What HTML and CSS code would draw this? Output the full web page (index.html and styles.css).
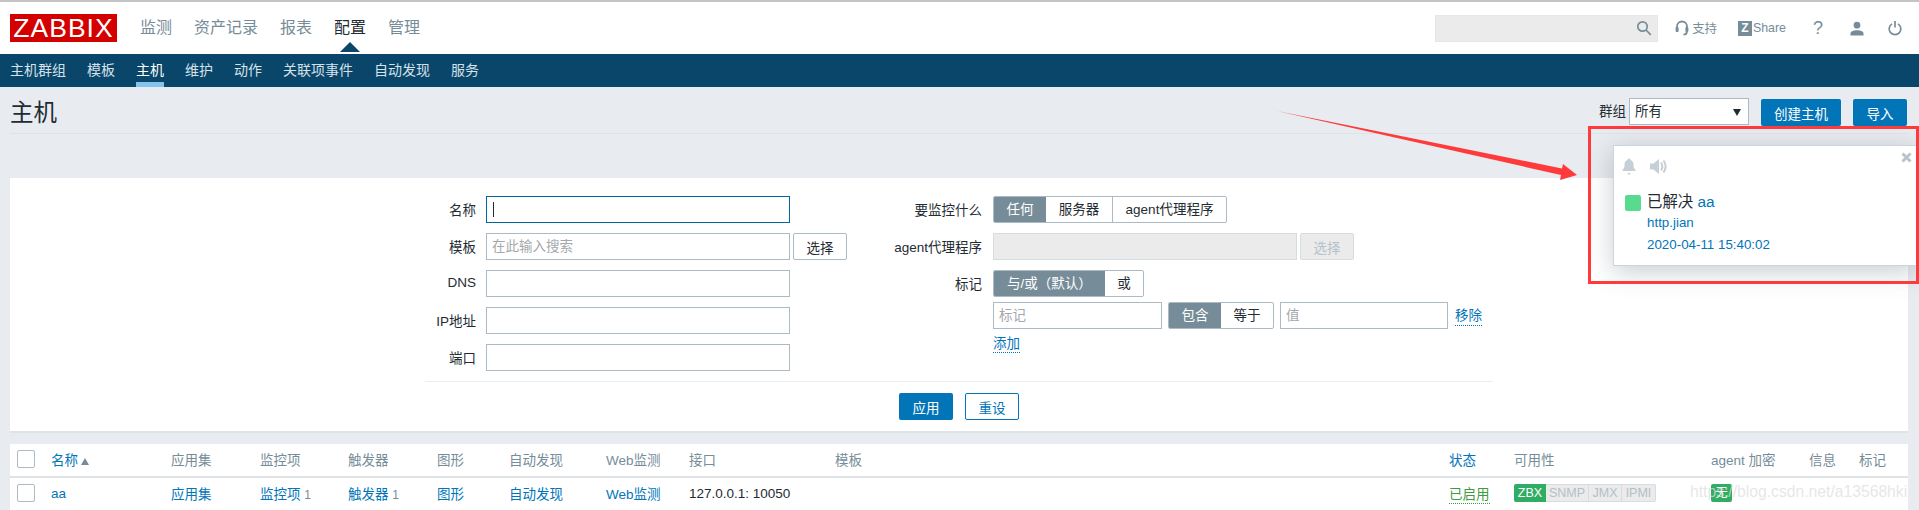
FILE: index.html
```html
<!DOCTYPE html>
<html lang="zh-CN">
<head>
    <meta charset="UTF-8">
    <title>主机 - Zabbix</title>
    <link rel="stylesheet" href="styles.css">
</head>
<body>
    <!-- Top menu -->
    <div class="top-bar">
        <div class="logo">ZABBIX</div>
        <div class="main-nav">
            <a>监测</a>
            <a>资产记录</a>
            <a>报表</a>
            <a class="active">配置</a>
            <a>管理</a>
        </div>
        <div class="top-tools">
            <div class="search-box">
                <svg class="search-icon" width="16" height="16" viewBox="0 0 16 16"><circle cx="6.5" cy="6.5" r="4.7"/><path d="M10 10l4.8 4.8"/></svg>
            </div>
            <a class="tool support">
                <svg width="14" height="16" viewBox="0 0 14 16"><path class="line" d="M2 9V6.5a5 5 0 0 1 10 0V9"/><rect class="solid" x="0.6" y="7" width="3" height="5" rx="1"/><rect class="solid" x="10.4" y="7" width="3" height="5" rx="1"/><path class="line" d="M11.8 12c0 1.7-1.5 2.6-3.3 2.6"/></svg>
                <span>支持</span>
            </a>
            <a class="tool share">
                <span class="z-box">Z</span>
                <span>Share</span>
            </a>
            <a class="tool help">?</a>
            <a class="tool user">
                <svg width="14" height="15" viewBox="0 0 15 15"><circle class="solid" cx="7.5" cy="4" r="3.6"/><path class="solid" d="M0.5 15v-2c0-2.3 2.8-3.6 7-3.6s7 1.300 7 3.600v2z"/></svg>
            </a>
            <a class="tool power">
                <svg width="14" height="16" viewBox="0 0 15 16"><path class="line" d="M4.300 3.600a6.200 6.200 0 1 0 6.400 0"/><path class="line" d="M7.500 0.500v7"/></svg>
            </a>
        </div>
    </div>

    <div class="sub-nav">
        <a>主机群组</a>
        <a>模板</a>
        <a class="active">主机</a>
        <a>维护</a>
        <a>动作</a>
        <a>关联项事件</a>
        <a>自动发现</a>
        <a>服务</a>
    </div>

    <!-- Page title -->
    <div class="title-row">
        <h1>主机</h1>
        <div class="title-controls">
            <label>群组</label>
            <div class="select-box">所有<span class="select-arrow"></span></div>
            <button class="btn primary first">创建主机</button>
            <button class="btn primary narrow">导入</button>
        </div>
    </div>

    <!-- Filter -->
    <div class="filter-panel">
        <div class="filter">
            <div class="filter-col left">
                <div class="form-row">
                    <label>名称</label>
                    <div class="fake-input focused"><span class="caret"></span></div>
                </div>
                <div class="form-row">
                    <label>模板</label>
                    <input class="text-input" type="text" placeholder="在此输入搜索">
                    <button class="btn plain pick">选择</button>
                </div>
                <div class="form-row">
                    <label>DNS</label>
                    <input class="text-input" type="text">
                </div>
                <div class="form-row">
                    <label>IP地址</label>
                    <input class="text-input" type="text">
                </div>
                <div class="form-row">
                    <label>端口</label>
                    <input class="text-input" type="text">
                </div>
            </div>
            <div class="filter-col right">
                <div class="form-row">
                    <label>要监控什么</label>
                    <div class="seg">
                        <span class="on w53">任何</span>
                        <span class="w66">服务器</span>
                        <span class="w115">agent代理程序</span>
                    </div>
                </div>
                <div class="form-row">
                    <label>agent代理程序</label>
                    <div class="fake-input disabled"></div>
                    <button class="btn plain pick-disabled">选择</button>
                </div>
                <div class="form-row tight">
                    <label>标记</label>
                    <div class="seg">
                        <span class="on w112">与/或（默认）</span>
                        <span class="w39">或</span>
                    </div>
                </div>
                <div class="tag-row">
                    <input class="text-input tag-input" type="text" placeholder="标记">
                    <div class="seg">
                        <span class="on w53">包含</span>
                        <span class="w53">等于</span>
                    </div>
                    <input class="text-input value-input" type="text" placeholder="值">
                    <a class="dotted remove">移除</a>
                </div>
                <div class="add-row"><a class="dotted">添加</a></div>
            </div>
        </div>
        <div class="filter-line"></div>
        <div class="filter-buttons">
            <button class="btn primary apply">应用</button>
            <button class="btn outline apply">重设</button>
        </div>
    </div>

    <!-- Hosts -->
    <div class="host-table">
        <div class="table-row head">
            <div><span class="check"></span></div>
            <div><a>名称</a><span class="sort-up"></span></div>
            <div>应用集</div>
            <div>监控项</div>
            <div>触发器</div>
            <div>图形</div>
            <div>自动发现</div>
            <div>Web监测</div>
            <div>接口</div>
            <div>模板</div>
            <div><a>状态</a></div>
            <div>可用性</div>
            <div>agent 加密</div>
            <div>信息</div>
            <div>标记</div>
        </div>
        <div class="table-row body-row">
            <div><span class="check"></span></div>
            <div><a>aa</a></div>
            <div><a>应用集</a></div>
            <div><a>监控项</a> <span class="count">1</span></div>
            <div><a>触发器</a> <span class="count">1</span></div>
            <div><a>图形</a></div>
            <div><a>自动发现</a></div>
            <div><a>Web监测</a></div>
            <div>127.0.0.1: 10050</div>
            <div></div>
            <div><a class="dotted enabled">已启用</a></div>
            <div class="badges">
                <span class="badge green w32">ZBX</span><span class="badge off w43">SNMP</span><span class="badge off w33">JMX</span><span class="badge off w34">IPMI</span>
            </div>
            <div class="badges"><span class="badge green w21">无</span></div>
            <div></div>
            <div></div>
        </div>
    </div>

    <!-- Things lying over the page -->
    <div class="popup">
        <div class="popup-icons">
            <svg width="14" height="17" viewBox="0 0 14 17"><path d="M7 0.500c1 0 1.500.7 1.500 1.400 2.400.7 3 2.700 3 5 0 2.500.8 3.700 2 5v1H.5v-1c1.200-1.300 2-2.500 2-5 0-2.300.6-4.300 3-5C5.500 1.200 6 .5 7 .5z"/><path d="M5.500 15h3a1.500 1.500 0 0 1-3 0z"/></svg>
            <svg width="17" height="17" viewBox="0 0 17 17"><path d="M0 5.500h3.500L9 1v15l-5.500-4.500H0z"/><path class="wave" d="M11 4.500c1.600 2.400 1.600 5.600 0 8"/><path class="wave" d="M13.500 2.500c2.600 3.600 2.600 8.400 0 12"/></svg>
            <svg class="popup-close" width="11" height="11" viewBox="0 0 11 11"><path d="M1.500 1.500l8 8M9.500 1.500l-8 8"/></svg>
        </div>
        <div class="popup-msg">
            <span class="popup-square"></span>
            <div class="popup-text">
                <div class="popup-title">已解决 <a>aa</a></div>
                <div class="popup-line"><a>http.jian</a></div>
                <div class="popup-line"><a>2020-04-11 15:40:02</a></div>
            </div>
        </div>
    </div>
    <div class="red-frame"></div>
    <svg class="red-arrow" width="330" height="90" viewBox="0 0 330 90"><polygon points="7,11 292,68.500 293,64 307,75 290,80 291,75"/></svg>
    <div class="watermark">https://blog.csdn.net/a13568hki</div>
</body>
</html>
```

FILE: styles.css
```css
* { margin: 0; padding: 0; box-sizing: border-box; }
html, body { height: 510px; overflow: hidden; }
body { position: relative; width: 1919px; font-family: "Liberation Sans", "Noto Sans CJK SC", sans-serif; font-size: 13.5px; color: #1f2c33; background: #e8ebef; }
a { color: #0275b8; }
button { font-family: inherit; font-size: inherit; }

.top-bar { height: 54px; display: flex; align-items: center; padding: 0 17px 0 10px; background: white; border-top: 2px solid #c4c4c4; }
.logo { width: 107px; height: 28px; background: #d40000; color: white; font-size: 26.5px; line-height: 28px; text-align: center; letter-spacing: 1px; overflow: hidden; }
.main-nav { display: flex; gap: 22px; margin-left: 23px; padding-bottom: 4px; font-size: 16px; }
.main-nav a { color: #768d99; }
.main-nav a.active { color: #1f2c33; position: relative; }
.main-nav a.active::after { content: ""; position: absolute; left: 6px; top: 28px; border: 10px solid transparent; border-top: 0; border-bottom-color: #0a466a; }

.top-tools { display: flex; align-items: center; margin-left: auto; color: #768d99; }
.top-tools svg .line { fill: none; stroke: #768d99; stroke-width: 1.800; }
.top-tools svg .solid { fill: #768d99; }
.search-box { width: 223px; height: 27px; background: #ebebeb; border: 1px solid #e4e6e8; display: flex; align-items: center; justify-content: flex-end; padding-right: 5px; }
.search-icon { fill: none; stroke: #768d99; stroke-width: 1.700; }
.tool { display: flex; align-items: center; gap: 3px; color: #768d99; font-size: 12.400px; }
.support { margin-left: 17px; }
.share { margin-left: 21px; gap: 1px; }
.z-box { width: 14px; height: 15px; background: #768d99; color: white; font-weight: bold; font-size: 12px; line-height: 15px; text-align: center; }
.help { width: 8px; margin-left: 28px; justify-content: center; font-size: 18px; }
.user { margin-left: 28px; }
.power { margin-left: 24px; }

.sub-nav { height: 33px; display: flex; gap: 21px; padding-left: 10px; background: #0a466a; }
.sub-nav a { color: #d5e2ea; font-size: 14px; line-height: 33px; }
.sub-nav a.active { color: white; border-bottom: 5px solid #84c5f0; }

.title-row { height: 47px; display: flex; justify-content: space-between; align-items: flex-start; margin: 0 11px 0 10px; padding-top: 11px; padding-right: 1px; border-bottom: 1px solid #dfe3e6; }
h1 { font-size: 23.500px; font-weight: normal; line-height: 30px; }
.title-controls { display: flex; align-items: flex-start; }
.title-controls label { line-height: 27px; margin-right: 3px; }
.select-box { width: 120px; height: 27px; position: relative; padding-left: 5px; line-height: 25px; background: white; border: 1px solid #acbbc3; }
.select-arrow { position: absolute; right: 7px; top: 10px; border: 4px solid transparent; border-bottom: 0; border-top: 7px solid #1f2c33; }

.btn { height: 27px; border-radius: 2px; border: 1px solid transparent; }
.btn.primary { background: #0275b8; color: white; margin-top: 1px; }
.btn.first { width: 80px; margin-left: 12px; }
.btn.narrow { width: 54px; margin-left: 12px; }
.btn.plain { background: white; border-color: #acbbc3; color: #1f2c33; }
.btn.outline { background: white; border-color: #0275b8; color: #0275b8; }
.pick { width: 54px; margin-left: 3px; }
.pick-disabled { width: 54px; margin-left: 3px; background: #ebebeb !important; border-color: #d5dde1 !important; color: #b5c2ca !important; }
.apply { width: 54px; margin-top: 0 !important; }

.filter-panel { margin: 44px 11px 0 10px; height: 255px; background: white; border-bottom: 2px solid #dfe3e6; }
.filter { display: flex; gap: 5px; height: 193px; padding: 18px 0 0 356px; }
.filter-col.left { width: 481px; }
.form-row { height: 27px; display: flex; align-items: center; margin-bottom: 10px; }
.form-row.tight { margin-bottom: 5px; }
.form-row label { flex: none; padding-bottom: 2px; text-align: right; }
.left label { width: 110px; margin-right: 10px; }
.right label { width: 130px; margin-right: 11px; }

.text-input, .fake-input { width: 304px; height: 27px; border: 1px solid #acbbc3; background: white; padding: 0 5px; font-family: inherit; font-size: inherit; outline: none; }
.text-input::placeholder { color: #a4a8ab; opacity: 1; }
.fake-input.focused { border-color: #00669e; display: flex; align-items: center; padding-left: 6px; }
.caret { width: 1px; height: 15px; background: #1f2c33; }
.fake-input.disabled { background: #ebebeb; border-color: #d5dde1; }

.seg { display: flex; height: 27px; border: 1px solid #acbbc3; border-radius: 2px; overflow: hidden; background: white; }
.seg span { text-align: center; line-height: 25px; border-left: 1px solid #acbbc3; }
.seg span:first-child { border-left: 0; }
.seg span.on { background: #768d99; color: white; }
.seg .on + span { border-left: 0; }
.w39 { width: 38px; }
.w53 { width: 52px; }
.w66 { width: 66px; }
.w112 { width: 111px; }
.w115 { width: 114px; }

.tag-row { display: flex; align-items: center; gap: 6px; margin-left: 141px; height: 27px; }
.tag-input { width: 169px; }
.value-input { width: 168px; }
.remove { margin-left: 1px; padding-bottom: 2px; margin-bottom: 1px; }
.add-row { margin: 3px 0 0 141px; }
.dotted { border-bottom: 1px dotted #0275b8; padding-bottom: 1px; }

.filter-line { margin: 10px 415px 0; height: 1px; background: #ebeef0; }
.filter-buttons { display: flex; justify-content: center; gap: 12px; margin-top: 11px; }

.host-table { margin: 11px 11px 0 10px; background: white; height: 80px; }
.table-row { display: grid; grid-template-columns: 41px 120px 89px 88px 89px 72px 97px 83px 146px 614px 65px 197px 98px 50px 49px; align-items: center; height: 32px; }
.table-row.head { height: 34px; padding-bottom: 2px; color: #768d99; border-bottom: 2px solid #dfe3e6; }
.table-row.body-row { padding-bottom: 2px; }
.check { display: block; width: 18px; height: 18px; margin-left: 7px; background: white; border: 1px solid #acbbc3; border-radius: 2px; }
.sort-up { display: inline-block; margin-left: 3px; border: 4px solid transparent; border-top: 0; border-bottom: 7px solid #768d99; }
.count { color: #768d99; font-size: 12px; }
.enabled { color: #3f9b3f; border-bottom-color: #3f9b3f; }

.badges { display: flex; }
.badge { height: 18px; line-height: 18px; text-align: center; font-size: 12.500px; }
.badge.green { background: #2fad62; color: white; border-radius: 2px 0 0 2px; }
.badge.off { background: #ebebeb; color: #b3bfc6; border: 1px solid #d5dde1; border-left: 0; line-height: 16px; }
.badge.off:last-child { border-radius: 0 2px 2px 0; }
.w21 { width: 21px; border-radius: 2px !important; }
.w32 { width: 32px; }
.w33 { width: 33px; }
.w34 { width: 34px; }
.w43 { width: 43px; }

.popup { position: absolute; left: 1613px; top: 145px; width: 304px; height: 121px; background: white; border: 1px solid #cbd5db; box-shadow: 0 6px 24px rgba(60,80,95,0.28); }
.popup-icons { display: flex; gap: 14px; padding: 12px 0 0 8px; height: 38px; }
.popup-icons svg { fill: #c6cfd5; }
.popup-icons .wave { fill: none; stroke: #c6cfd5; stroke-width: 2; }
.popup-close { position: absolute; right: 4px; top: 6px; stroke: #b9c4cb; stroke-width: 3; }
.popup-msg { display: flex; gap: 6px; padding: 8px 0 0 11px; }
.popup-square { flex: none; width: 16px; height: 16px; margin-top: 3px; background: #59db8f; border-radius: 2px; }
.popup-title { height: 20px; font-size: 15.400px; line-height: 20px; }
.popup-line { height: 22px; line-height: 22px; font-size: 13.350px; }

.red-frame { position: absolute; left: 1588px; top: 126px; width: 331px; height: 158px; border: 3px solid #ff3a3a; }
.red-arrow { position: absolute; left: 1270px; top: 100px; fill: #ff3a3a; }
.watermark { position: absolute; left: 1690px; top: 483px; font-size: 15.700px; line-height: 18px; color: rgba(222,222,222,0.75); white-space: nowrap; }
```
